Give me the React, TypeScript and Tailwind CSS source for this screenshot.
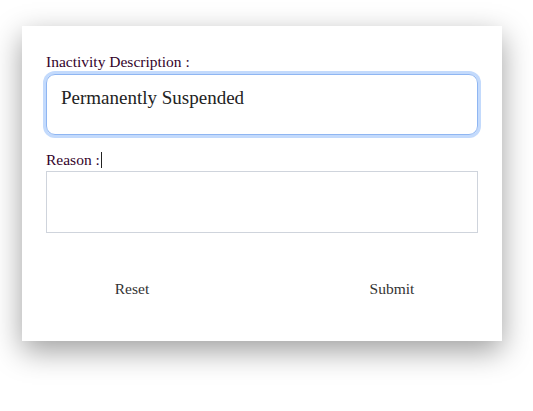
export default function App() {
  return (
    <div className="w-[533px] h-[411px] bg-white pt-[26px] pl-[22px]" style={{ fontFamily: '"Liberation Serif", serif' }}>
      <div className="w-[480px] h-[315px] bg-white shadow-[0_10px_28px_rgba(0,0,0,0.38)] pt-[27px] px-[24px] flex flex-col font-['Liberation_Serif',serif]">
        <label className="text-[15.5px] leading-[18px] text-[#33022a]">Inactivity Description :</label>
        <div className="mt-[3px] h-[61px] w-[432px] rounded-[9px] border border-[#8fb6f2] ring-[3px] ring-[#c3dafc] flex items-center pl-[14px] pb-[13px]">
          <span className="font-['Liberation_Serif',serif] text-[19px] text-[#222]">Permanently Suspended</span>
        </div>
        <label className="mt-[16px] text-[15.5px] leading-[18px] text-[#33022a] flex items-center">
          Reason :<span className="ml-[1px] inline-block w-px h-[16px] bg-[#222]" />
        </label>
        <div className="mt-[2px] h-[62px] w-[432px] border border-[#cfd4dc]" />
        <div className="mt-[44px] -mx-[24px] px-[50px] flex justify-between">
          <button className="w-[120px] text-[15.5px] text-[#333]">Reset</button>
          <button className="w-[120px] text-[15.5px] text-[#333]">Submit</button>
        </div>
      </div>
    </div>
  );
}
